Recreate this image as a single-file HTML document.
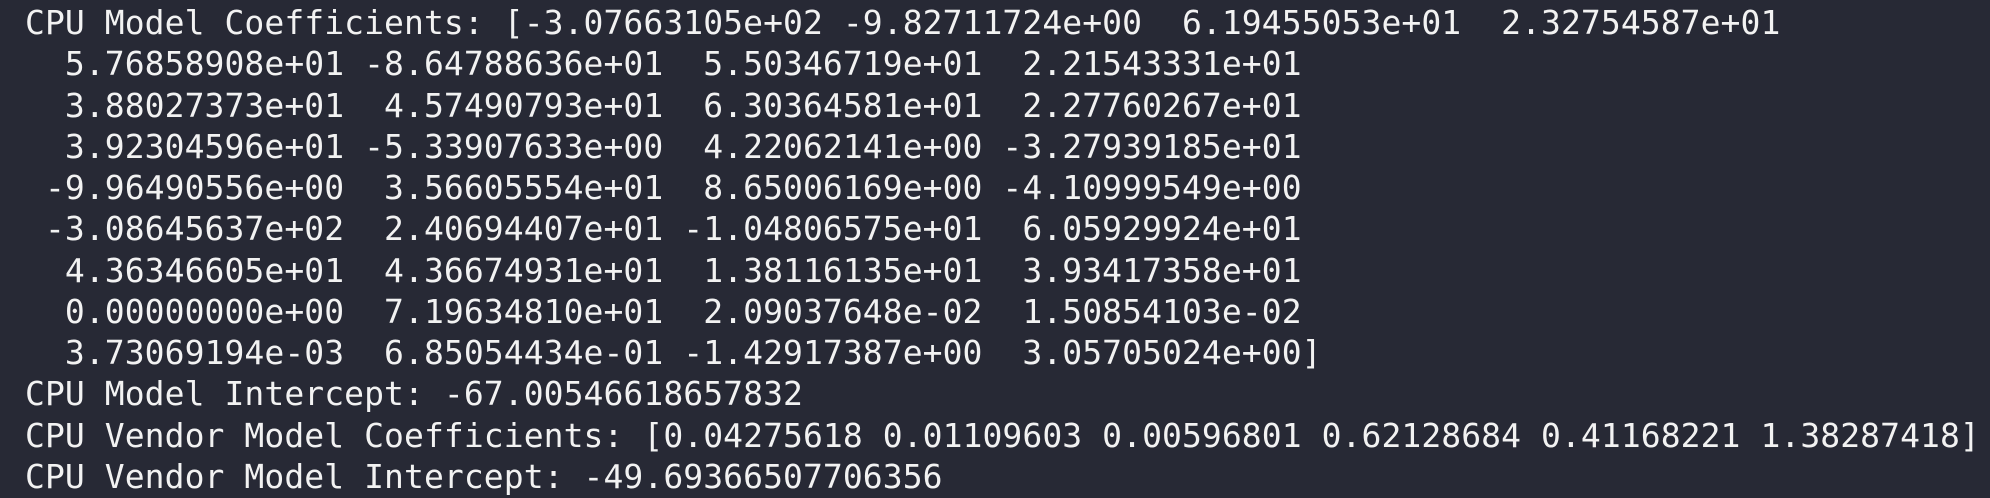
<!DOCTYPE html>
<html><head><meta charset="utf-8"><style>
html,body{margin:0;padding:0;background:#272935;width:1990px;height:498px;overflow:hidden}
pre{margin:0;position:absolute;left:25px;top:2px;font-family:"DejaVu Sans Mono","Liberation Mono",monospace;font-size:33px;line-height:41.25px;letter-spacing:0.08px;color:#f2f2f2;white-space:pre}
</style></head><body><pre>CPU Model Coefficients: [-3.07663105e+02 -9.82711724e+00  6.19455053e+01  2.32754587e+01
  5.76858908e+01 -8.64788636e+01  5.50346719e+01  2.21543331e+01
  3.88027373e+01  4.57490793e+01  6.30364581e+01  2.27760267e+01
  3.92304596e+01 -5.33907633e+00  4.22062141e+00 -3.27939185e+01
 -9.96490556e+00  3.56605554e+01  8.65006169e+00 -4.10999549e+00
 -3.08645637e+02  2.40694407e+01 -1.04806575e+01  6.05929924e+01
  4.36346605e+01  4.36674931e+01  1.38116135e+01  3.93417358e+01
  0.00000000e+00  7.19634810e+01  2.09037648e-02  1.50854103e-02
  3.73069194e-03  6.85054434e-01 -1.42917387e+00  3.05705024e+00]
CPU Model Intercept: -67.00546618657832
CPU Vendor Model Coefficients: [0.04275618 0.01109603 0.00596801 0.62128684 0.41168221 1.38287418]
CPU Vendor Model Intercept: -49.69366507706356</pre></body></html>
